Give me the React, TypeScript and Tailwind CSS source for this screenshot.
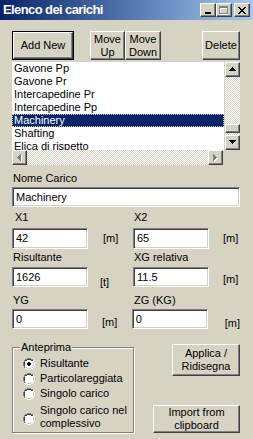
import React from "react";

const raised =
  "border border-t-white border-l-white border-r-[#404040] border-b-[#404040] shadow-[inset_-1px_-1px_#808080]";
const sunken =
  "bg-white border border-t-[#808080] border-l-[#808080] border-r-white border-b-white shadow-[inset_1px_1px_#404040,inset_-1px_-1px_#d4d0c8]";
const checker =
  "bg-[image:conic-gradient(#ffffff_25%,#d6d3c3_0_50%,#ffffff_0_75%,#d6d3c3_0)] bg-[length:2px_2px]";

function Tri({ dir, disabled }: { dir: "up" | "down" | "left" | "right"; disabled?: boolean }) {
  const vert = dir === "up" || dir === "down";
  const w = vert ? 7 : 4;
  const h = vert ? 4 : 7;
  const pts =
    dir === "up"
      ? "3.5,0 7,4 0,4"
      : dir === "down"
      ? "0,0 7,0 3.5,4"
      : dir === "left"
      ? "4,0 4,7 0,3.5"
      : "0,0 4,3.5 0,7";
  return (
    <svg width={w + 1} height={h + 1} viewBox={`0 0 ${w + 1} ${h + 1}`} shapeRendering="crispEdges">
      {disabled && <polygon points={pts} fill="#ffffff" transform="translate(1,1)" />}
      <polygon points={pts} fill={disabled ? "#808080" : "#000000"} />
    </svg>
  );
}

function ScrollBtn({ dir, disabled }: { dir: "up" | "down" | "left" | "right"; disabled?: boolean }) {
  return (
    <div className={`${raised} bg-[#d6d3c3] w-[15px] h-[15px] flex items-center justify-center shrink-0`}>
      <Tri dir={dir} disabled={disabled} />
    </div>
  );
}

function Btn({
  children,
  className,
  isDefault,
}: {
  children: React.ReactNode;
  className?: string;
  isDefault?: boolean;
}) {
  const inner = (
    <div className={`${raised} w-full h-full flex flex-col items-center justify-center text-center leading-[13px]`}>
      {children}
    </div>
  );
  return isDefault ? (
    <div className={`border border-black ${className ?? ""}`}>{inner}</div>
  ) : (
    <div className={className}>{inner}</div>
  );
}

function Field({ value, className }: { value: string; className?: string }) {
  return (
    <div className={`${sunken} h-[20px] flex items-center pl-[3px] ${className ?? ""}`}>
      <span className="leading-[13px]">{value}</span>
    </div>
  );
}

function Radio({ checked }: { checked?: boolean }) {
  return (
    <svg width="12" height="12" viewBox="0 0 12 12" shapeRendering="crispEdges" className="shrink-0">
      <path d="M4 0h4v1H4zM2 1h2v1H2zM8 1h2v1H8zM1 2h1v2H1zM0 4h1v4H0zM1 8h1v2H1z" fill="#808080" />
      <path d="M4 1h4v1H4zM2 2h2v1H2zM8 2h2v1H8zM2 3h1v1H2zM1 4h1v4H1zM2 8h1v1H2z" fill="#404040" />
      <path d="M10 2h1v2h-1zM11 4h1v4h-1zM10 8h1v2h-1zM8 10h2v1H8zM2 10h2v1H2zM4 11h4v1H4z" fill="#ffffff" />
      <path d="M9 3h1v1H9zM10 4h1v4h-1zM9 8h1v1H9zM8 9h2v1H8zM2 9h2v1H2zM4 10h4v1H4z" fill="#d4d0c8" />
      <path d="M4 2h4v1h2v1h-0v0H10v4H10v1H8v1H4V9H2V8H2V4h0V3h2z" fill="#ffffff" />
      <path d="M4 2h4v1h1v1h1v4h-1v1h-1v1H4V9H3V8H2V4h1V3h1z" fill="#ffffff" />
      {checked && <path d="M5 4h2v1h1v2H7v1H5V7H4V5h1z" fill="#000000" />}
    </svg>
  );
}

const items = [
  "Gavone Pp",
  "Gavone Pr",
  "Intercapedine Pr",
  "Intercapedine Pp",
  "Machinery",
  "Shafting",
  "Elica di rispetto",
];

export default function App() {
  return (
    <div className="w-[253px] h-[439px] bg-[#d6d3c3] text-black text-[11px] leading-[13px] font-['Liberation_Sans',Arial,sans-serif] overflow-hidden">
      {/* Title bar */}
      <div className="h-[20px] flex items-center justify-between pl-[3px] pr-[3px] bg-gradient-to-r from-[#0a246a] to-[#a6caf0]">
        <span className="text-white font-bold text-[13px] tracking-[-0.6px] leading-[16px]">Elenco dei carichi</span>
        <div className="flex items-center">
          <div className={`${raised} bg-[#d6d3c3] w-[16px] h-[14px] flex items-end justify-center pb-[2px]`}>
            <div className="w-[6px] h-[2px] bg-black mr-[1px]" />
          </div>
          <div className={`${raised} bg-[#d6d3c3] w-[16px] h-[14px] flex items-center justify-center`}>
            <svg width="10" height="9" viewBox="0 0 10 9" shapeRendering="crispEdges">
              <path d="M1 1h8v8H1zM2 3v5h6V3z" fill="#ffffff" fillRule="evenodd" />
              <path d="M0 0h9v8H0zM1 2v5h7V2z" fill="#808080" fillRule="evenodd" />
            </svg>
          </div>
          <div className={`${raised} bg-[#d6d3c3] w-[16px] h-[14px] flex items-center justify-center ml-[2px]`}>
            <svg width="8" height="7" viewBox="0 0 8 7" shapeRendering="crispEdges">
              <path
                d="M0 0h2v1h1v1h2V1h1V0h2v1H7v1H6v1H5v1h1v1h1v1h1v1H6V6H5V5H3v1H2v1H0V6h1V5h1V4h1V3H2V2H1V1H0z"
                fill="#000000"
              />
            </svg>
          </div>
        </div>
      </div>

      <div className="pl-[12px] pr-[13px]">
        {/* Buttons */}
        <div className="mt-[11px] flex h-[29px]">
          <Btn isDefault className="w-[62px] h-[29px]">
            Add New
          </Btn>
          <Btn className="w-[35px] h-[29px] ml-[16px]">
            <span>Move</span>
            <span>Up</span>
          </Btn>
          <Btn className="w-[36px] h-[29px]">
            <span>Move</span>
            <span>Down</span>
          </Btn>
          <Btn className="w-[38px] h-[29px] ml-auto">Delete</Btn>
        </div>

        {/* List */}
        <div className="mt-[2px] w-[228px] h-[103px] grid grid-cols-[212px_16px] grid-rows-[88px_15px]">
          <div className="bg-white overflow-hidden">
            {items.map((it) => (
              <div
                key={it}
                className={`h-[13px] leading-[13px] pl-[2px] whitespace-nowrap ${
                  it === "Machinery"
                    ? "bg-[#0a246a] text-white outline-1 outline-dotted -outline-offset-1 outline-[#d8d090]"
                    : ""
                }`}
              >
                {it}
              </div>
            ))}
          </div>
          <div className="flex flex-col items-end">
            <ScrollBtn dir="up" />
            <div className={`flex-1 w-[15px] flex flex-col ${checker}`}>
              <div className="flex-1" />
              <div className={`${raised} bg-[#d6d3c3] h-[9px] w-[15px]`} />
              <div className="h-[2px]" />
            </div>
            <ScrollBtn dir="down" />
          </div>
          <div className="flex">
            <ScrollBtn dir="left" disabled />
            <div className={`flex-1 ${checker}`} />
            <ScrollBtn dir="right" disabled />
            <div className="w-[1px]" />
          </div>
          <div />
        </div>

        {/* Nome Carico */}
        <div className="mt-[7px] pl-[1px]">Nome Carico</div>
        <Field value="Machinery" className="mt-[2px] w-[228px]" />

        {/* X1 / X2 */}
        <div className="mt-[4px] flex">
          <div className="w-[121px] pl-[3px]">X1</div>
          <div className="pl-[1px]">X2</div>
        </div>
        <div className="mt-[4px] flex items-center">
          <div className="w-[121px] flex items-center">
            <Field value="42" className="w-[76px] h-[21px]" />
            <span className="ml-[15px]">[m]</span>
          </div>
          <div className="flex items-center">
            <Field value="65" className="w-[76px] h-[21px]" />
            <span className="ml-[14px]">[m]</span>
          </div>
        </div>

        {/* Risultante / XG relativa */}
        <div className="mt-[2px] flex">
          <div className="w-[121px] pl-[1px]">Risultante</div>
          <div className="pl-[1px]">XG relativa</div>
        </div>
        <div className="mt-[3px] flex">
          <div className="w-[121px] flex">
            <Field value="1626" className="w-[76px]" />
            <span className="ml-[12px] mt-[9px]">[t]</span>
          </div>
          <div className="flex">
            <Field value="11.5" className="w-[76px]" />
            <span className="ml-[14px] mt-[6px]">[m]</span>
          </div>
        </div>

        {/* YG / ZG */}
        <div className="mt-[5px] flex">
          <div className="w-[121px] pl-[1px]">YG</div>
          <div className="pl-[1px]">ZG (KG)</div>
        </div>
        <div className="mt-[2px] flex">
          <div className="w-[121px] flex">
            <Field value="0" className="w-[76px]" />
            <span className="ml-[14px] mt-[7px]">[m]</span>
          </div>
          <div className="flex">
            <Field value="0" className="w-[76px]" />
            <span className="ml-[17px] mt-[8px]">[m]</span>
          </div>
        </div>

        {/* Bottom section */}
        <div className="mt-[13px] flex justify-between">
          <div className="relative mt-[4px] w-[122px] h-[86px] border border-[#808080] shadow-[1px_1px_0_#ffffff,inset_1px_1px_0_#ffffff]">
            <span className="absolute left-[7px] -top-[7px] px-[1px] bg-[#d6d3c3]">Anteprima</span>
            <div className="pt-[8px] pl-[10px] flex flex-col">
              <div className="h-[15px] flex items-center gap-[5px]">
                <Radio checked />
                <span>Risultante</span>
              </div>
              <div className="h-[15px] flex items-center gap-[5px]">
                <Radio />
                <span>Particolareggiata</span>
              </div>
              <div className="h-[15px] flex items-center gap-[5px]">
                <Radio />
                <span>Singolo carico</span>
              </div>
              <div className="mt-[3px] flex items-center gap-[5px]">
                <div className="mt-[4px]">
                  <Radio />
                </div>
                <div className="flex flex-col">
                  <span>Singolo carico nel</span>
                  <span>complessivo</span>
                </div>
              </div>
            </div>
          </div>
          <div className="flex flex-col items-end">
            <Btn className="mt-[1px] w-[68px] h-[32px]">
              <span>Applica /</span>
              <span>Ridisegna</span>
            </Btn>
            <Btn className="mt-[29px] w-[87px] h-[28px]">
              <span>Import from</span>
              <span>clipboard</span>
            </Btn>
          </div>
        </div>
      </div>
    </div>
  );
}
